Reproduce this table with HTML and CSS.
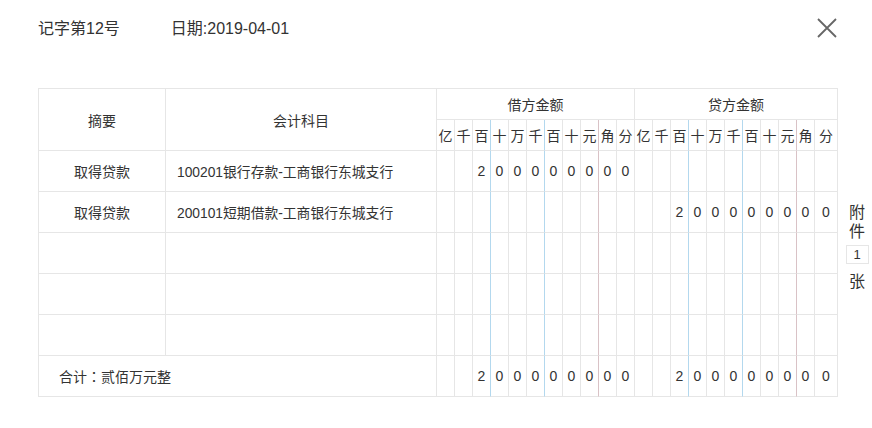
FILE: index.html
```html
<!DOCTYPE html>
<html lang="zh">
<head>
<meta charset="utf-8">
<title>记账凭证</title>
<link rel="stylesheet" href="styles.css">
</head>
<body>
<div class="page">
  <div class="header">
    <span class="voucher-no">记字第12号</span>
    <span class="date">日期:2019-04-01</span>
    <span class="close" aria-label="关闭">
      <svg width="20" height="20" viewBox="0 0 20 20"><path d="M1 1 L19 19 M19 1 L1 19" stroke="#666" stroke-width="1.8" fill="none"/></svg>
    </span>
  </div>
  <div class="main">
    <div class="grid">
      <div class="c h2 center">摘要</div>
      <div class="c h2 center">会计科目</div>
      <div class="c span11 center">借方金额</div>
      <div class="c span11 center">贷方金额</div>

      <div class="c d">亿</div><div class="c d">千</div><div class="c d b">百</div><div class="c d">十</div><div class="c d">万</div><div class="c d b">千</div><div class="c d">百</div><div class="c d">十</div><div class="c d r">元</div><div class="c d">角</div><div class="c d">分</div>
      <div class="c d">亿</div><div class="c d">千</div><div class="c d b">百</div><div class="c d">十</div><div class="c d">万</div><div class="c d b">千</div><div class="c d">百</div><div class="c d">十</div><div class="c d r">元</div><div class="c d">角</div><div class="c d">分</div>

      <div class="c center">取得贷款</div>
      <div class="c left">100201银行存款-工商银行东城支行</div>
      <div class="c d"></div><div class="c d"></div><div class="c d b">2</div><div class="c d">0</div><div class="c d">0</div><div class="c d b">0</div><div class="c d">0</div><div class="c d">0</div><div class="c d r">0</div><div class="c d">0</div><div class="c d">0</div>
      <div class="c d"></div><div class="c d"></div><div class="c d b"></div><div class="c d"></div><div class="c d"></div><div class="c d b"></div><div class="c d"></div><div class="c d"></div><div class="c d r"></div><div class="c d"></div><div class="c d"></div>

      <div class="c center">取得贷款</div>
      <div class="c left">200101短期借款-工商银行东城支行</div>
      <div class="c d"></div><div class="c d"></div><div class="c d b"></div><div class="c d"></div><div class="c d"></div><div class="c d b"></div><div class="c d"></div><div class="c d"></div><div class="c d r"></div><div class="c d"></div><div class="c d"></div>
      <div class="c d"></div><div class="c d"></div><div class="c d b">2</div><div class="c d">0</div><div class="c d">0</div><div class="c d b">0</div><div class="c d">0</div><div class="c d">0</div><div class="c d r">0</div><div class="c d">0</div><div class="c d">0</div>

      <div class="c"></div>
      <div class="c"></div>
      <div class="c d"></div><div class="c d"></div><div class="c d b"></div><div class="c d"></div><div class="c d"></div><div class="c d b"></div><div class="c d"></div><div class="c d"></div><div class="c d r"></div><div class="c d"></div><div class="c d"></div>
      <div class="c d"></div><div class="c d"></div><div class="c d b"></div><div class="c d"></div><div class="c d"></div><div class="c d b"></div><div class="c d"></div><div class="c d"></div><div class="c d r"></div><div class="c d"></div><div class="c d"></div>

      <div class="c"></div>
      <div class="c"></div>
      <div class="c d"></div><div class="c d"></div><div class="c d b"></div><div class="c d"></div><div class="c d"></div><div class="c d b"></div><div class="c d"></div><div class="c d"></div><div class="c d r"></div><div class="c d"></div><div class="c d"></div>
      <div class="c d"></div><div class="c d"></div><div class="c d b"></div><div class="c d"></div><div class="c d"></div><div class="c d b"></div><div class="c d"></div><div class="c d"></div><div class="c d r"></div><div class="c d"></div><div class="c d"></div>

      <div class="c"></div>
      <div class="c"></div>
      <div class="c d"></div><div class="c d"></div><div class="c d b"></div><div class="c d"></div><div class="c d"></div><div class="c d b"></div><div class="c d"></div><div class="c d"></div><div class="c d r"></div><div class="c d"></div><div class="c d"></div>
      <div class="c d"></div><div class="c d"></div><div class="c d b"></div><div class="c d"></div><div class="c d"></div><div class="c d b"></div><div class="c d"></div><div class="c d"></div><div class="c d r"></div><div class="c d"></div><div class="c d"></div>

      <div class="c span2 total">合计<span class="colon">：</span>贰佰万元整</div>
      <div class="c d"></div><div class="c d"></div><div class="c d b">2</div><div class="c d">0</div><div class="c d">0</div><div class="c d b">0</div><div class="c d">0</div><div class="c d">0</div><div class="c d r">0</div><div class="c d">0</div><div class="c d">0</div>
      <div class="c d"></div><div class="c d"></div><div class="c d b">2</div><div class="c d">0</div><div class="c d">0</div><div class="c d b">0</div><div class="c d">0</div><div class="c d">0</div><div class="c d r">0</div><div class="c d">0</div><div class="c d">0</div>
    </div>
    <div class="attach">
      <span class="attach-label">附<br>件</span>
      <span class="attach-count">1</span>
      <span class="attach-label">张</span>
    </div>
  </div>
</div>
</body>
</html>
```

FILE: styles.css
```css
html, body {
  margin: 0;
  padding: 0;
  background: #fff;
}

body {
  font-family: "Liberation Sans", "Noto Sans CJK SC", sans-serif;
  color: #333;
}

.page {
  display: flex;
  flex-direction: column;
}

.header {
  height: 88px;
  box-sizing: border-box;
  padding: 19px 35px 0 38px;
  display: flex;
  align-items: flex-start;
  font-size: 16px;
  line-height: 20px;
}

.voucher-no {
  margin-right: 51px;
}

.close {
  margin-left: auto;
  width: 20px;
  height: 20px;
  display: flex;
  margin-top: -1px;
}

.main {
  display: flex;
  align-items: flex-start;
  padding-left: 38px;
}

.grid {
  display: grid;
  grid-template-columns: 127px 271px repeat(21, 18px) 23px;
  grid-template-rows: 31px 31px repeat(6, 41px);
  border-left: 1px solid #e6e6e6;
  border-top: 1px solid #e6e6e6;
  font-size: 14px;
}

.c {
  box-sizing: border-box;
  border-right: 1px solid #e6e6e6;
  border-bottom: 1px solid #e6e6e6;
  display: flex;
  align-items: center;
  white-space: nowrap;
  overflow: hidden;
}

.center {
  justify-content: center;
}

.left {
  padding-left: 11px;
  font-size: 13.8px;
}

.h2 {
  grid-row: span 2;
}

.span11 {
  grid-column: span 11;
}

.span2 {
  grid-column: span 2;
}

.total {
  padding-left: 20px;
}

.colon {
  font-family: "Noto Sans CJK TC", sans-serif;
}

.d {
  justify-content: center;
  font-size: 14px;
}

.b {
  border-right-color: #b3d8ee;
}

.r {
  border-right-color: #d9c2c6;
}

.attach {
  display: flex;
  flex-direction: column;
  align-items: center;
  margin-top: 115px;
  margin-left: 7px;
  width: 24px;
  font-size: 16px;
  line-height: 19px;
}

.attach-count {
  box-sizing: border-box;
  width: 23px;
  height: 19px;
  border: 1px solid #e6e6e6;
  font-size: 13px;
  line-height: 17px;
  text-align: center;
  margin: 4px 0 8px;
}
```
